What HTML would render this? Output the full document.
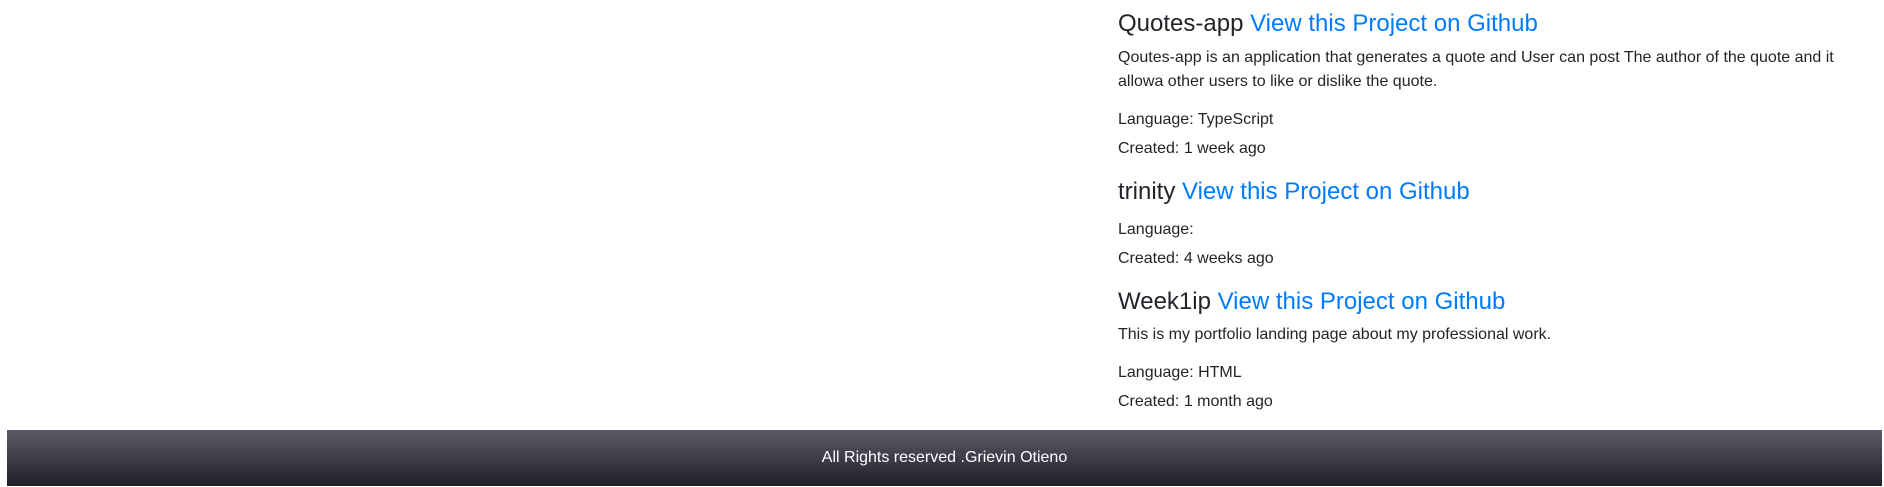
<!DOCTYPE html>
<html><head><meta charset="utf-8"><style>
html,body{margin:0;padding:0;background:#fff;width:1884px;height:487px;overflow:hidden;font-family:"Liberation Sans",Arial,sans-serif;color:#212529;position:relative}
.l{position:absolute;left:1118px;white-space:nowrap}
.h{font-size:24px;line-height:30px}
.t{font-size:16px;line-height:24px}
a{color:#007bff;text-decoration:none}
.f{position:absolute;left:7px;top:430px;width:1875px;height:56px;background:linear-gradient(#5b5b69,#1f2029);color:#fff;font-size:16px;line-height:56px;text-align:center}
</style></head><body>
<div class="l h" style="top:9px">Quotes-app <a>View this Project on Github</a></div>
<div class="l t" style="top:46px">Qoutes-app is an application that generates a quote and User can post The author of the quote and it</div>
<div class="l t" style="top:70px">allowa other users to like or dislike the quote.</div>
<div class="l t" style="top:108px">Language: TypeScript</div>
<div class="l t" style="top:137px">Created: 1 week ago</div>
<div class="l h" style="top:177px">trinity <a>View this Project on Github</a></div>
<div class="l t" style="top:218px">Language:</div>
<div class="l t" style="top:247px">Created: 4 weeks ago</div>
<div class="l h" style="top:287px">Week1ip <a>View this Project on Github</a></div>
<div class="l t" style="top:323px">This is my portfolio landing page about my professional work.</div>
<div class="l t" style="top:361px">Language: HTML</div>
<div class="l t" style="top:390px">Created: 1 month ago</div>
<div class="f">All Rights reserved .Grievin Otieno</div>
</body></html>
